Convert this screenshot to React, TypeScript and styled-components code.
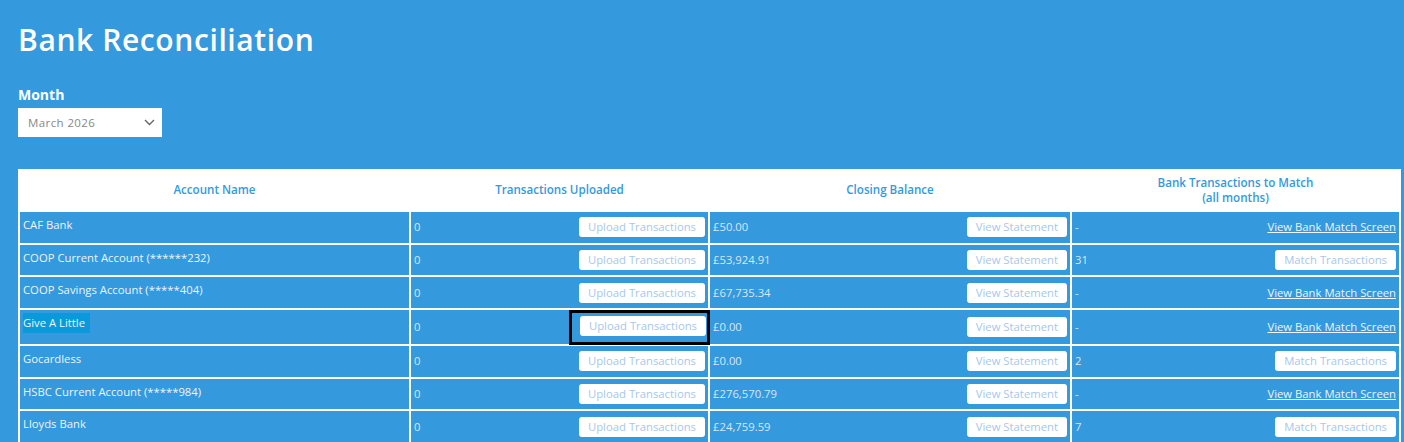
import { FC } from "react";
import styled, { createGlobalStyle } from "styled-components";

const GlobalStyle = createGlobalStyle`
  html, body {
    margin: 0;
    padding: 0;
    background: #3499dd;
    font-family: "Open Sans", "Noto Sans", Arial, sans-serif;
    overflow: hidden;
  }
`;

const Page = styled.div`
  padding: 21px 3px 0 18px;
  color: #fff;
`;

const Title = styled.h1`
  margin: 0 0 26px 0;
  font-size: 30px;
  line-height: 38px;
  font-weight: 600;
  letter-spacing: 0.6px;
`;

const FieldLabel = styled.label`
  display: block;
  font-size: 14px;
  line-height: 20px;
  font-weight: 700;
  margin-bottom: 3px;
`;

const MonthSelect = styled.div`
  width: 144px;
  height: 29px;
  box-sizing: border-box;
  background: #fff;
  display: flex;
  align-items: center;
  justify-content: space-between;
  padding: 0 7px 0 10px;
  color: #888;
  font-size: 11.5px;
  letter-spacing: 0.4px;
  margin-bottom: 32px;
`;

const Table = styled.table`
  width: 1383px;
  border-collapse: separate;
  border-spacing: 2px;
  background: #fff;
  table-layout: fixed;
  font-size: 11.3px;
`;

const HeadCell = styled.th`
  background: #fff;
  color: #3499dd;
  font-weight: 600;
  font-size: 11.6px;
  line-height: 14.5px;
  text-align: center;
  vertical-align: middle;
  padding: 0 4px;
  height: 39px;
  box-sizing: border-box;
`;

const Row = styled.tr<{ $tall?: boolean }>`
  height: ${(p) => (p.$tall ? "34px" : "30.7px")};
`;

const NameCell = styled.td`
  background: #3499dd;
  color: #edf5fc;
  vertical-align: top;
  padding: 3px 3px 0 3px;
  line-height: 20px;
`;

const Cell = styled.td`
  background: #3499dd;
  color: #d6e8f8;
  vertical-align: middle;
  padding: 2px 3px 2px 3px;
`;

const Highlight = styled.span<{ $on?: boolean }>`
  display: inline-block;
  padding-right: ${(p) => (p.$on ? "5px" : "0")};
  background: ${(p) => (p.$on ? "#0a9adb" : "transparent")};
`;

const CellInner = styled.div`
  display: flex;
  align-items: center;
  justify-content: space-between;
  line-height: 20px;
`;

const SmallButton = styled.button`
  background: #fff;
  border: none;
  border-radius: 3px;
  color: #a6c7ec;
  font-family: "Open Sans", "Noto Sans", Arial, sans-serif;
  font-size: 11.3px;
  line-height: 20px;
  height: 20px;
  padding: 0 9px;
  cursor: pointer;
  white-space: nowrap;
`;

const FocusRing = styled.span`
  display: inline-flex;
  padding: 3px 1px 6px 8px;
  margin-right: -2px;
  outline: 3px solid #000;
`;

const MatchLink = styled.a`
  color: #edf5fc;
  text-decoration: underline;
  cursor: pointer;
  white-space: nowrap;
`;

type Account = {
  name: string;
  uploaded: string;
  balance: string;
  toMatch: string;
  focused?: boolean;
};

const accounts: Account[] = [
  { name: "CAF Bank", uploaded: "0", balance: "£50.00", toMatch: "-" },
  { name: "COOP Current Account (******232)", uploaded: "0", balance: "£53,924.91", toMatch: "31" },
  { name: "COOP Savings Account (*****404)", uploaded: "0", balance: "£67,735.34", toMatch: "-" },
  { name: "Give A Little", uploaded: "0", balance: "£0.00", toMatch: "-", focused: true },
  { name: "Gocardless", uploaded: "0", balance: "£0.00", toMatch: "2" },
  { name: "HSBC Current Account (*****984)", uploaded: "0", balance: "£276,570.79", toMatch: "-" },
  { name: "Lloyds Bank", uploaded: "0", balance: "£24,759.59", toMatch: "7" },
];

const Chevron = () => (
  <svg width="11" height="7" viewBox="0 0 11 7" fill="none">
    <polyline points="1,1 5.5,5.5 10,1" stroke="#666" strokeWidth="1.4" />
  </svg>
);

const App: FC = () => (
  <>
    <GlobalStyle />
    <Page>
      <Title>Bank Reconciliation</Title>
      <FieldLabel>Month</FieldLabel>
      <MonthSelect>
        <span>March 2026</span>
        <Chevron />
      </MonthSelect>
      <Table>
        <colgroup>
          <col style={{ width: 389 }} />
          <col style={{ width: 297 }} />
          <col style={{ width: 360 }} />
          <col style={{ width: 327 }} />
        </colgroup>
        <thead>
          <tr>
            <HeadCell>Account Name</HeadCell>
            <HeadCell>Transactions Uploaded</HeadCell>
            <HeadCell>Closing Balance</HeadCell>
            <HeadCell>
              Bank Transactions to Match
              <br />
              (all months)
            </HeadCell>
          </tr>
        </thead>
        <tbody>
          {accounts.map((a) => (
            <Row key={a.name} $tall={a.focused}>
              <NameCell>
                <Highlight $on={a.focused}>{a.name}</Highlight>
              </NameCell>
              <Cell>
                <CellInner>
                  <span>{a.uploaded}</span>
                  {a.focused ? (
                    <FocusRing>
                      <SmallButton>Upload Transactions</SmallButton>
                    </FocusRing>
                  ) : (
                    <SmallButton>Upload Transactions</SmallButton>
                  )}
                </CellInner>
              </Cell>
              <Cell>
                <CellInner>
                  <span>{a.balance}</span>
                  <SmallButton>View Statement</SmallButton>
                </CellInner>
              </Cell>
              <Cell>
                <CellInner>
                  <span>{a.toMatch}</span>
                  {a.toMatch === "-" ? (
                    <MatchLink>View Bank Match Screen</MatchLink>
                  ) : (
                    <SmallButton>Match Transactions</SmallButton>
                  )}
                </CellInner>
              </Cell>
            </Row>
          ))}
        </tbody>
      </Table>
    </Page>
  </>
);

export default App;
